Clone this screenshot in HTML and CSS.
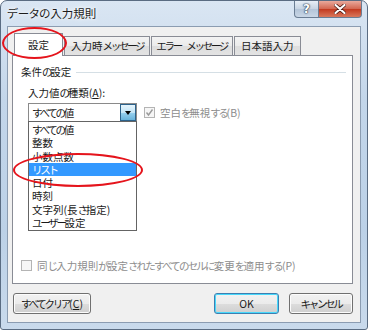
FILE: index.html
```html
<!DOCTYPE html>
<html lang="ja">
<head>
    <meta charset="UTF-8">
    <title>データの入力規則</title>
    <link rel="stylesheet" href="styles.css">
</head>
<body>
    <div class="window">
        <div class="titlebar">
            <span class="title">データの入力規則</span>
            <div class="caption-buttons">
                <span class="cap-btn help">?</span>
                <span class="cap-btn close">
                    <svg width="12" height="10" viewBox="0 0 12 10"><path d="M1.5 1 L10.5 9 M10.5 1 L1.5 9" stroke="#4a1810" stroke-width="3.6" stroke-linecap="round"/><path d="M1.5 1 L10.5 9 M10.5 1 L1.5 9" stroke="#fff" stroke-width="2.2" stroke-linecap="round"/></svg>
                </span>
            </div>
        </div>
        <div class="client">
            <div class="tabs">
                <div class="tab active">設定</div>
                <div class="tab">入力時<span class="k">メッセージ</span></div>
                <div class="tab tab-error"><span class="k word">エラー</span> <span class="k">メッセージ</span></div>
                <div class="tab">日本語入力</div>
            </div>
            <div class="panel">
                <div class="group-title"><span>条件<span class="k">の</span>設定</span><span class="rule"></span></div>
                <div class="field-label">入力値<span class="k">の</span>種類(<u>A</u>):</div>
                <div class="field-row">
                    <div class="combo">
                        <span class="combo-value"><span class="k">すべての</span>値</span>
                        <span class="combo-btn"><span class="arrow"></span></span>
                        <ul class="dropdown">
                            <li><span class="k">すべての</span>値</li>
                            <li>整数</li>
                            <li>小数点数</li>
                            <li class="selected"><span class="k">リスト</span></li>
                            <li>日付</li>
                            <li>時刻</li>
                            <li>文字列(長<span class="k">さ</span>指定)</li>
                            <li><span class="k">ユーザー</span>設定</li>
                        </ul>
                    </div>
                    <div class="check">
                        <span class="box"><svg width="9" height="9" viewBox="0 0 9 9"><path d="M1.5 4.5 L3.5 7 L7.5 1.5" fill="none" stroke="#9a9a9a" stroke-width="1.4"/></svg></span>
                        <span>空白<span class="k">を</span>無視<span class="k">する</span>(B)</span>
                    </div>
                </div>
                <div class="check apply-all">
                    <span class="box"></span>
                    <span>同<span class="k">じ</span>入力規則<span class="k">が</span>設定<span class="k">されたすべてのセルに</span>変更<span class="k">を</span>適用<span class="k">する</span>(P)</span>
                </div>
            </div>
            <div class="footer">
                <button class="btn btn-clear"><span class="k">すべてクリア</span>(<u>C</u>)</button>
                <button class="btn btn-ok">OK</button>
                <button class="btn btn-cancel"><span class="k">キャンセル</span></button>
            </div>
        </div>
        <div class="mark mark-tab"></div>
        <div class="mark mark-list"></div>
    </div>
</body>
</html>
```

FILE: styles.css
```css
body {
    margin: 0;
    background: #ffffff;
    font-family: "Noto Sans CJK JP", sans-serif;
    font-size: 10.5px;
    color: #1a1a1a;
}
/* kana run narrower, like Meiryo UI */
.k {
    letter-spacing: -2.3px;
}
.window {
    position: relative;
    width: 368px;
    height: 330px;
    box-sizing: border-box;
    border: 1px solid #5a6c82;
    border-radius: 7px 7px 3px 3px;
    padding: 0 6px 6px 6px;
    background: linear-gradient(to bottom, #dae6f3 0%, #c3d6ea 30%, #bcd1e7 70%, #c9daec 100%);
}
.titlebar {
    display: flex;
    align-items: flex-start;
    height: 25px;
    margin: 0 -6px;
    padding: 0 5px 0 6px;
}
.title {
    padding-top: 5px;
    line-height: 15px;
    font-size: 11.5px;
    font-feature-settings: "palt";
    color: #1c1c1c;
    text-shadow: 0 0 6px #ffffff, 0 0 3px #ffffff;
}
.caption-buttons {
    margin-left: auto;
    display: flex;
}
.cap-btn {
    height: 17px;
    box-sizing: border-box;
    display: flex;
    align-items: center;
    justify-content: center;
    border: 1px solid #6a7d93;
    border-top: none;
}
.help {
    width: 25px;
    border-radius: 0 0 0 4px;
    background: linear-gradient(to bottom, #e7eef6, #c6d3e2 50%, #b3c4d8 51%, #c9d7e6);
    color: #ffffff;
    font-weight: bold;
    font-size: 12px;
    font-family: "DejaVu Sans", sans-serif;
    text-shadow: 0 0 1px #2f3e52, 0 0 1px #2f3e52, 0 0 2px #2f3e52;
}
.close {
    width: 43px;
    border-left: none;
    border-radius: 0 0 4px 0;
    background: linear-gradient(to bottom, #e9a99c, #d2654f 50%, #c2391f 51%, #d9785c);
}
.client {
    height: 297px;
    box-sizing: border-box;
    border: 1px solid #8b9cb1;
    background: #f0f0f0;
    padding: 6px 7px 8px 4px;
    display: flex;
    flex-direction: column;
}
.tabs {
    display: flex;
    align-items: flex-end;
    height: 22px;
    margin-left: 2px;
}
.tab {
    position: relative;
    z-index: 1;
    height: 20px;
    box-sizing: border-box;
    margin-bottom: -1px;
    margin-left: 1px;
    padding: 0 6px;
    line-height: 18px;
    border: 1px solid #898c95;
    background: linear-gradient(to bottom, #f3f3f3, #ebebeb 50%, #dddddd 51%, #e3e3e3);
}
.tab.active {
    height: 23px;
    margin-left: 0;
    padding: 0 13px;
    line-height: 22px;
    border-bottom: none;
    background: #ffffff;
}
.tab-error {
    padding: 0 5px 0 4px;
}
.tab-error .word {
    margin-right: 3px;
}
.panel {
    flex: 1;
    border: 1px solid #898c95;
    background: #ffffff;
    padding: 9px 6px 11px 8px;
    display: flex;
    flex-direction: column;
}
.group-title {
    display: flex;
    align-items: center;
    line-height: 13px;
}
.rule {
    flex: 1;
    height: 1px;
    margin: 1px 0 0 5px;
    background: #d5dfe5;
}
.field-label {
    margin: 8px 0 0 7px;
    line-height: 13px;
}
.field-row {
    display: flex;
    align-items: center;
    margin: 4px 0 0 7px;
}
.combo {
    position: relative;
    display: flex;
    width: 109px;
    height: 19px;
    box-sizing: border-box;
    border: 1px solid #8a8a8a;
    background: #ffffff;
}
.combo-value {
    flex: 1;
    padding-left: 3px;
    line-height: 17px;
}
.combo-btn {
    width: 16px;
    box-sizing: border-box;
    border: 1px solid #2c628b;
    background: linear-gradient(to bottom, #e5f4fc, #c4e5f6 50%, #98d1ef 51%, #68b3db);
    display: flex;
    align-items: center;
    justify-content: center;
}
.arrow {
    width: 0;
    height: 0;
    margin-top: 1px;
    border-left: 3.5px solid transparent;
    border-right: 3.5px solid transparent;
    border-top: 4px solid #000000;
}
.dropdown {
    position: absolute;
    top: 100%;
    left: -1px;
    z-index: 2;
    width: 109px;
    box-sizing: border-box;
    margin: 0;
    padding: 1px 0;
    list-style: none;
    border: 1px solid #646464;
    background: #ffffff;
}
.dropdown li {
    height: 13.3px;
    line-height: 13.3px;
    padding-left: 3px;
}
.dropdown li.selected {
    background: #3399ff;
    color: #ffffff;
}
.check {
    display: flex;
    align-items: center;
    gap: 5px;
    color: #8d8d8d;
    line-height: 13px;
}
.field-row .check {
    margin-left: 7px;
}
.box {
    width: 11px;
    height: 11px;
    box-sizing: border-box;
    border: 1px solid #b4b4b4;
    background: #f6f6f6;
    display: flex;
    align-items: center;
    justify-content: center;
}
.apply-all {
    margin-top: auto;
}
.apply-all .k {
    letter-spacing: -1.8px;
}
.footer {
    display: flex;
    margin-top: 9px;
    height: 21px;
}
.btn {
    height: 21px;
    padding: 0;
    font-family: inherit;
    font-size: 10.5px;
    color: #1a1a1a;
    border: 1px solid #707070;
    border-radius: 3px;
    background: linear-gradient(to bottom, #f2f2f2, #ebebeb 50%, #dddddd 51%, #cfcfcf);
    box-shadow: inset 0 0 0 1px #fcfcfc;
}
.btn-clear {
    width: 78px;
    margin-left: 1px;
}
.btn-ok {
    width: 65px;
    margin-left: auto;
    border-color: #3c7fb1;
    box-shadow: inset 0 0 0 1px #48d8fb;
}
.btn-cancel {
    width: 64px;
    margin-left: 10px;
}
.mark {
    position: absolute;
    z-index: 5;
    box-sizing: border-box;
    border: 2px solid #e5141c;
    border-radius: 50%;
}
.mark-tab {
    left: 1px;
    top: 26px;
    width: 65px;
    height: 32px;
}
.mark-list {
    left: 12px;
    top: 152px;
    width: 130px;
    height: 34px;
}
```
